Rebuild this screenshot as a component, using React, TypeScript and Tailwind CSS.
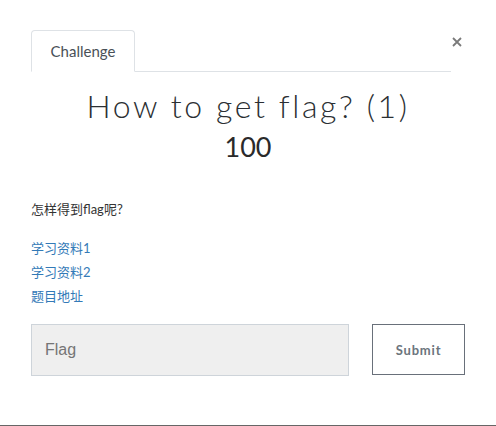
import React from 'react'

const links = ['学习资料1', '学习资料2', '题目地址']

export default function App() {
  return (
    <div
      className="relative w-[496px] h-[426px] bg-white border-b border-[#666666] px-[31px] pt-[30px]"
      style={{ fontFamily: 'Lato, "Noto Sans CJK SC", sans-serif' }}
    >
      {/* Close */}
      <button className="absolute top-[37px] left-[452px] w-[10px] h-[10px]">
        <svg viewBox="0 0 10 10" className="w-[10px] h-[10px] block">
          <path d="M1 1 L9 9 M9 1 L1 9" stroke="#7a7a7a" strokeWidth="1.8" />
        </svg>
      </button>

      {/* Tabs */}
      <div className="flex mr-[14px] border-b border-[#dee2e6] h-[42px]">
        <div className="h-[42px] w-[104px] -mb-px border border-[#dee2e6] border-b-white rounded-t-[4px] bg-white flex items-center justify-center text-[15px] text-[#495057]">
          Challenge
        </div>
      </div>

      {/* Title */}
      <h2 className="mt-[15px] text-center text-[32px] leading-[1.2] font-light tracking-[2.6px] text-[#2b2f33]">
        How to get flag? (1)
      </h2>
      <h3 className="mt-[6px] text-center text-[27px] leading-[1.2] text-[#2a2a2a]">100</h3>

      {/* Description */}
      <div className="mt-[33px] text-[13px] leading-[24px] text-[#333]">
        <p>怎样得到flag呢?</p>
        <div className="mt-[15px] flex flex-col">
          {links.map((l) => (
            <a key={l} href="#" className="text-[#337ab7] leading-[24px]">
              {l}
            </a>
          ))}
        </div>
      </div>

      {/* Form */}
      <div className="mt-[16px] flex items-start gap-[23px]">
        <input
          placeholder="Flag"
          className="w-[318px] h-[52px] bg-[#efefef] border border-[#ced4da] px-[13px] text-[16px] text-[#495057] placeholder:text-[#757575] outline-none"
          style={{ fontFamily: '"Liberation Sans", Arial, sans-serif' }}
        />
        <button className="w-[93px] h-[51px] pt-[2px] border border-[#69707a] bg-white text-[13px] font-bold tracking-[0.8px] text-[#6c757d]">
          Submit
        </button>
      </div>
    </div>
  )
}
